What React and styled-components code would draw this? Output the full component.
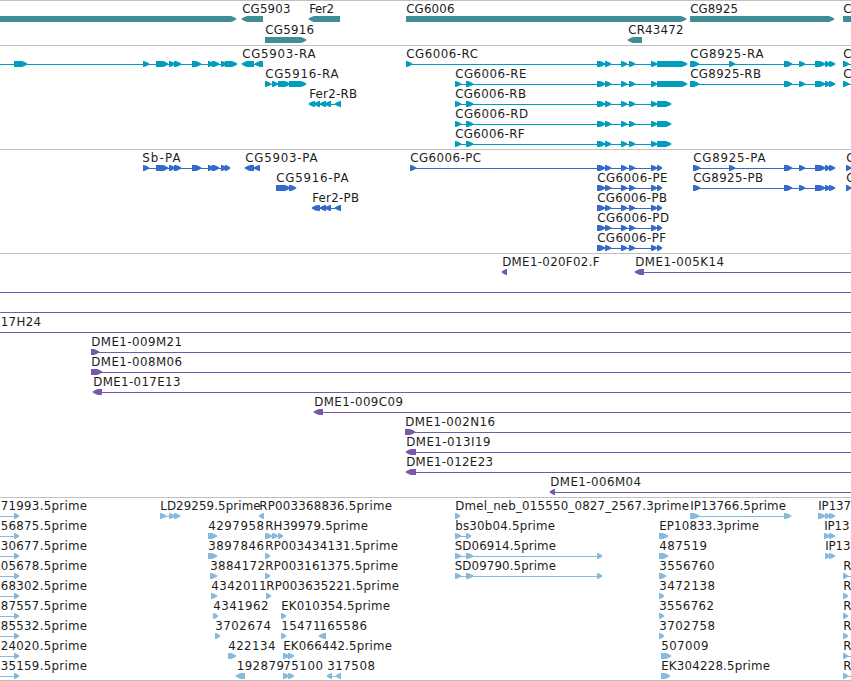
import React from "react";
import styled, { createGlobalStyle } from "styled-components";

const GlobalStyle = createGlobalStyle`
  html, body { margin: 0; padding: 0; background: #fff; overflow: hidden; }
`;

const Browser = styled.main`
  display: flex;
  flex-direction: column;
  width: 851px;
  height: 681px;
  overflow: hidden;
  background: #fff;
  box-sizing: border-box;
  border-bottom: 1px solid #c0c0c0;
`;

const Track = styled.section`
  flex: none;
  box-sizing: border-box;
  height: ${(p) => p.$height}px;
  border-top: 1px solid #c0c0c0;
  color: ${(p) => p.$color};
`;

const Row = styled.svg`
  display: block;
  width: 851px;
  height: ${(p) => p.$height}px;
  overflow: visible;
`;

const Label = styled.text`
  fill: #1c1c1c;
  font-family: "DejaVu Sans", sans-serif;
  font-size: 11.8px;
`;

const Shape = styled.path`
  fill: currentColor;
`;

const WIDTH = 851;

// An exon is a block whose leading end tapers to a point.
function exonPath(a, b, left) {
  const head = Math.min(6, b - a);
  if (left) {
    const n = a + head;
    return `M${b} 15H${n - 1}L${a + head * 0.4} 16L${a - 0.3} 17.4V18.6L${a + head * 0.4} 20L${n - 1} 21H${b}Z`;
  }
  const n = b - head;
  return `M${a} 15H${n + 1}L${b - head * 0.4} 16L${b + 0.3} 17.4V18.6L${b - head * 0.4} 20L${n + 1} 21H${a}Z`;
}

function Feature({ item }) {
  const { label, at, end, exons = [], left, line } = item;
  return (
    <g>
      {line && <Shape d={`M${line[0]} 18H${line[1]}V19H${line[0]}Z`} />}
      {exons.map(([a, b], i) => (
        <Shape key={i} d={exonPath(a, b, left)} />
      ))}
      {label && (
        <Label x={at + 0.2} y={12} textLength={end ? end - at + 0.3 : undefined}>
          {label}
        </Label>
      )}
    </g>
  );
}

// label, label start, label end, exons, extra (line: connector span, left: direction)
const f = (label, at, end, exons, extra) => ({ label, at, end, exons, ...extra });
const L = { left: true };
const span = (a, b, left) => ({ line: [a, b], left });

const genes = [
  [
    f("", 0, 0, [[-10, 236]]),
    f("CG5903", 242, 290, [[242, 263]], L),
    f("Fer2", 309, 333.5, [[309, 340]], L),
    f("CG6006", 406, 454, [[406, 686]]),
    f("CG8925", 690, 737.5, [[690, 834]]),
    f("C", 843, 0, [[843, 870]]),
  ],
  [
    f("CG5916", 265, 313.5, [[265, 306]]),
    f("CR43472", 628, 683, [[628, 642]], L),
  ],
];

const sb = [[143, 149], [156, 168], [169, 175], [174, 181], [192, 201], [208, 214], [212, 219]];
const mid = [[597, 605], [605, 611], [621, 627], [629, 635], [651, 657]];
const cg8925 = [[784, 792], [799, 805], [815, 825], [825, 830], [829, 835]];
const start6006 = [[455, 461], [466, 473]];
const rna = (name, end, last) =>
  f(name, 455, end, [...start6006, ...mid, [657, last]], span(455, last - 3));

const transcripts = [
  [
    f("", 0, 0, [[14, 27], ...sb, [221, 227], [225, 237]], span(0, 235)),
    f("CG5903-RA", 242, 315, [[242, 254], [255, 263]], span(244, 262, true)),
    f("CG6006-RC", 406, 477.5, [[406, 412], ...mid, [657, 687]], span(406, 683)),
    f("CG8925-RA", 690, 763, [[690, 699], [729, 735], ...cg8925], span(690, 832)),
    f("C", 843, 0, [[843, 849]], span(843, WIDTH)),
  ],
  [
    f("CG5916-RA", 265, 338, [[265, 271], [272, 278], [278, 290], [289, 306]], span(265, 303)),
    rna("CG6006-RE", 526, 687),
    f("CG8925-RB", 690, 760.5, [[690, 699], ...cg8925], span(690, 832)),
    f("C", 843, 0, [[843, 849]], span(843, WIDTH)),
  ],
  [
    f("Fer2-RB", 309, 356.5, [[309, 315], [314, 320], [320, 326], [325, 331], [335, 341]], span(311, 340, true)),
    rna("CG6006-RB", 525.5, 671),
  ],
  [rna("CG6006-RD", 527.5, 671)],
  [rna("CG6006-RF", 524, 671)],
];

const cds = (name, end) => f(name, 597, end, [...mid, [657, 662]], span(597, 660));

const proteins = [
  [
    f("Sb-PA", 142, 180, [...sb, [221, 227], [225, 230]], span(143, 228)),
    f("CG5903-PA", 245, 317, [[245, 254], [254, 260]], span(247, 259, true)),
    f("CG6006-PC", 410, 480.5, [[410, 416], ...mid, [657, 662]], span(410, 660)),
    f("CG8925-PA", 693, 765, [[693, 700], [729, 735], ...cg8925], span(693, 832)),
    f("C", 846, 0, [[846, 851]], span(846, WIDTH)),
  ],
  [
    f("CG5916-PA", 276, 348, [[276, 290], [289, 296]], span(276, 293)),
    cds("CG6006-PE", 667),
    f("CG8925-PB", 693, 762.5, [[693, 700], ...cg8925], span(693, 832)),
    f("C", 846, 0, [[846, 851]], span(846, WIDTH)),
  ],
  [
    f("Fer2-PB", 312, 358.5, [[312, 318], [316, 320], [320, 326], [325, 331], [335, 341]], span(314, 340, true)),
    cds("CG6006-PB", 666.5),
  ],
  [cds("CG6006-PD", 668.5)],
  [cds("CG6006-PF", 665.5)],
];

const clone = (name, x, end, tip, left) =>
  f(name, x, end, [[x, tip]], span(x + 3, WIDTH, left));

const clones = [
  [f("DME1-020F02.F", 502, 599, [[502, 507]], L), clone("DME1-005K14", 635, 723.5, 644, true)],
  [f("", 0, 0, [], span(0, WIDTH))],
  [f("", 0, 0, [], span(0, WIDTH))],
  [f("17H24", 0.5, 40.5, [], span(0, WIDTH))],
  [clone("DME1-009M21", 91, 181.5, 99)],
  [clone("DME1-008M06", 91, 181.5, 102)],
  [clone("DME1-017E13", 93, 180, 102, true)],
  [clone("DME1-009C09", 314, 402.5, 323, true)],
  [clone("DME1-002N16", 405, 494.5, 415)],
  [clone("DME1-013I19", 406, 490, 416, true)],
  [clone("DME1-012E23", 406, 492.5, 416, true)],
  [clone("DME1-006M04", 550, 640.5, 555, true)],
];

const edge = (name) => f(name, 0.5, 86.5, [[14, 19]], span(0, 16));
const right = (long) => f("R", 843, 0, [[843, 848]], long ? span(843, WIDTH) : {});

const ests = [
  [
    edge("71993.5prime"),
    f("LD29259.5prime", 160, 260, [[160, 166], [169, 175], [174, 180]], span(160, 176)),
    f("RP003368836.5prime", 259, 391.5, [[259, 264]], L),
    f("Dmel_neb_015550_0827_2567.3prime", 455, 688.5, [[455, 460]]),
    f("IP13766.5prime", 690, 785.5, [[690, 699], [784, 791]], span(690, 788)),
    f("IP137", 818, 850.5, [[818, 825], [825, 830], [829, 835]], span(818, 832)),
  ],
  [
    edge("56875.5prime"),
    f("4297958", 208, 263.5, [[208, 217]]),
    f("RH39979.5prime", 265, 367.5, [[265, 272], [272, 278], [278, 283]], span(265, 281)),
    f("bs30b04.5prime", 455, 554.5, [[455, 461], [466, 471]], span(455, 469)),
    f("EP10833.3prime", 659, 758.5, [[659, 668]]),
    f("IP13", 824, 849, [[824, 830], [829, 835]], span(824, 832)),
  ],
  [
    edge("30677.5prime"),
    f("3897846", 208, 263.5, [[208, 217]]),
    f("RP003434131.5prime", 265, 397.5, [[265, 270]]),
    f("SD06914.5prime", 454.5, 555.5, [[455, 461], [466, 473], [597, 602]], span(455, 600)),
    f("487519", 659, 706.5, [[659, 668]]),
    f("IP13", 825, 850, [[825, 830], [829, 835]], span(825, 832)),
  ],
  [
    edge("05678.5prime"),
    f("3884172", 210, 264.5, [[210, 217]]),
    f("RP003161375.5prime", 265, 397.5, [[265, 270]]),
    f("SD09790.5prime", 454.5, 555.5, [[455, 461], [466, 473], [597, 602]], span(455, 600)),
    f("3556760", 659, 714, [[659, 666]]),
    right(true),
  ],
  [
    edge("68302.5prime"),
    f("4342011", 211, 266, [[211, 217]]),
    f("RP003635221.5prime", 266, 398.5, [[266, 271]]),
    f("3472138", 659, 714.5, [[659, 664]]),
    right(),
  ],
  [
    edge("87557.5prime"),
    f("4341962", 213, 268, [[213, 218]]),
    f("EK010354.5prime", 281, 389.5, [[281, 286]]),
    f("3556762", 659, 713.5, [[659, 664]]),
    right(),
  ],
  [
    edge("85532.5prime"),
    f("3702674", 215, 270.5, [[215, 220]]),
    f("15471", 281, 320, [[281, 286]]),
    f("165586", 319, 366.5, [[319, 326]], L),
    f("3702758", 659, 714.5, [[659, 664]]),
    right(),
  ],
  [
    edge("24020.5prime"),
    f("422134", 228, 275, [[228, 236]]),
    f("EK066442.5prime", 283, 391.5, [[283, 289], [288, 294]], span(283, 291)),
    f("507009", 661, 708, [[661, 671]]),
    right(true),
  ],
  [
    edge("35159.5prime"),
    f("192879", 236.5, 283.5, [[236, 245]], L),
    f("75100", 283, 322.5, [[283, 289], [288, 294]], span(283, 291)),
    f("317508", 327, 374.5, [[327, 332], [336, 341]], span(329, 340, true)),
    f("EK304228.5prime", 661, 769.5, [[661, 670]]),
    right(true),
  ],
];

const tracks = [
  { id: "genes", color: "#408e95", height: 45, pitch: 21, rows: genes },
  { id: "transcripts", color: "#009dbe", height: 104, pitch: 20, rows: transcripts },
  { id: "proteins", color: "#326bcc", height: 104, pitch: 20, rows: proteins },
  { id: "clones", color: "#7858aa", height: 244, pitch: 20, rows: clones },
  { id: "ests", color: "#87bbdd", height: 183, pitch: 20, rows: ests },
];

export default function App() {
  return (
    <>
      <GlobalStyle />
      <Browser>
        {tracks.map((t) => (
          <Track key={t.id} $height={t.height} $color={t.color}>
            {t.rows.map((row, i) => (
              <Row key={i} $height={t.pitch}>
                {row.map((item, j) => (
                  <Feature key={j} item={item} />
                ))}
              </Row>
            ))}
          </Track>
        ))}
      </Browser>
    </>
  );
}
